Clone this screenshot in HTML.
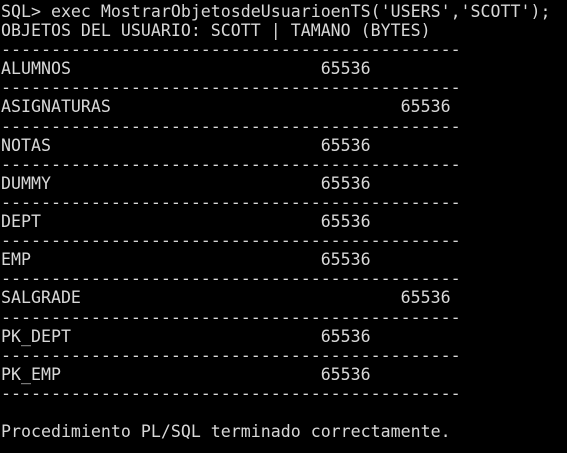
<!DOCTYPE html>
<html><head><meta charset="utf-8"><style>
html,body{margin:0;padding:0;background:#000;width:567px;height:453px;overflow:hidden}
pre{margin:0;padding:2px 0 0 1px;font-family:"DejaVu Sans Mono","Liberation Mono",monospace;font-size:16.6px;line-height:19.1px;color:#d8d8d8;white-space:pre}
</style></head><body><pre>SQL&gt; exec MostrarObjetosdeUsuarioenTS('USERS','SCOTT');
OBJETOS DEL USUARIO: SCOTT | TAMANO (BYTES)
----------------------------------------------
ALUMNOS                         65536
----------------------------------------------
ASIGNATURAS                             65536
----------------------------------------------
NOTAS                           65536
----------------------------------------------
DUMMY                           65536
----------------------------------------------
DEPT                            65536
----------------------------------------------
EMP                             65536
----------------------------------------------
SALGRADE                                65536
----------------------------------------------
PK_DEPT                         65536
----------------------------------------------
PK_EMP                          65536
----------------------------------------------

Procedimiento PL/SQL terminado correctamente.</pre></body></html>
